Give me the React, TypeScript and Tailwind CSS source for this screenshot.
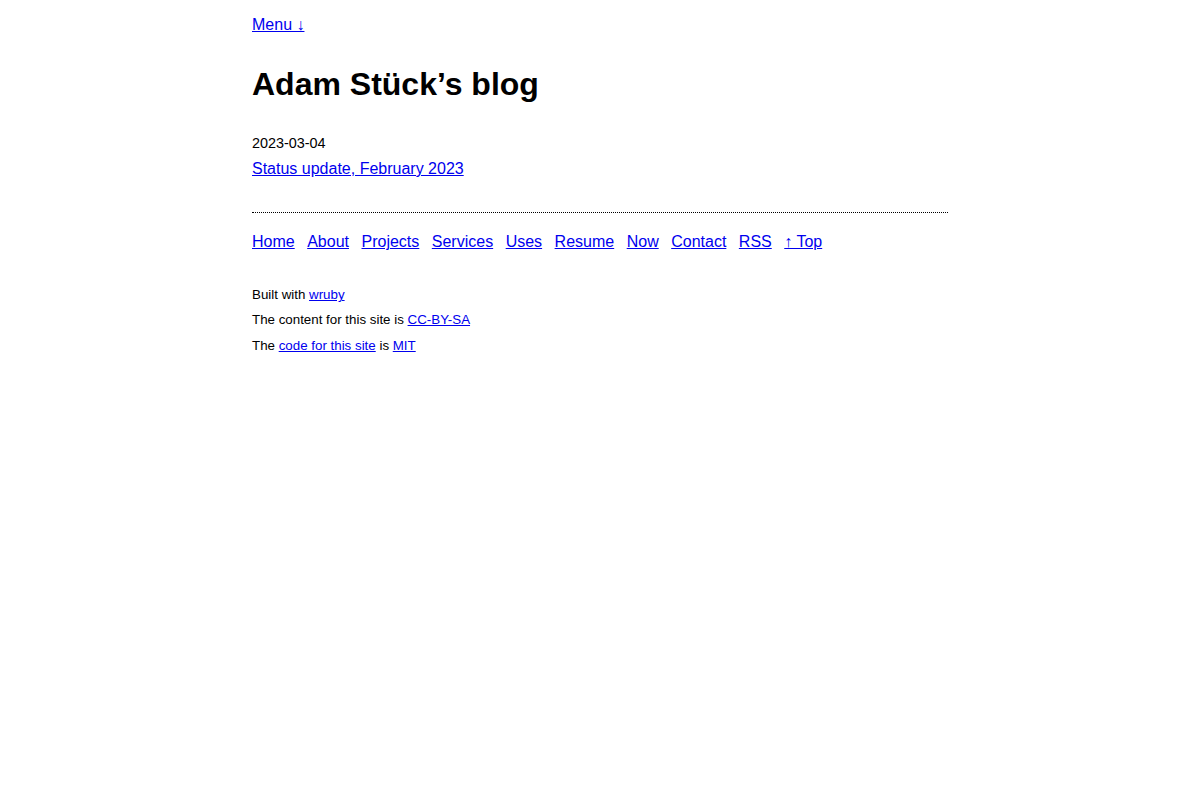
import React from 'react';

const navLinks = ['Home', 'About', 'Projects', 'Services', 'Uses', 'Resume', 'Now', 'Contact', 'RSS', '↑ Top'];

function A({ children }: { children: React.ReactNode }) {
  return (
    <a href="#" className="text-[#0000ee] underline">
      {children}
    </a>
  );
}

export default function App() {
  return (
    <div className="min-h-[800px] bg-white text-black font-['Liberation_Sans',Arial,sans-serif]">
      <div className="mx-auto w-[696px] pt-[12px] text-[16px]">
        {/* Menu */}
        <div className="leading-[25px]">
          <A>Menu ↓</A>
        </div>

        <h1 className="mt-[29px] text-[32px] font-bold leading-[37px]">Adam Stück’s blog</h1>

        {/* Post list */}
        <div className="mt-[28px] leading-[25px]">
          <div className="text-[14.4px]">2023-03-04</div>
          <div>
            <A>Status update, February 2023</A>
          </div>
        </div>

        <hr className="mt-[31px] border-0 border-t border-dotted border-black" />

        {/* Nav */}
        <nav className="mt-[16px] flex gap-[12.5px] leading-[25px]">
          {navLinks.map((l) => (
            <A key={l}>{l}</A>
          ))}
        </nav>

        {/* Footer */}
        <footer className="mt-[28px] text-[13.333px]">
          <div className="leading-[25px]">
            Built with <A>wruby</A>
          </div>
          <div className="leading-[25px]">
            The content for this site is <A>CC-BY-SA</A>
          </div>
          <div className="leading-[27px]">
            The <A>code for this site</A> is <A>MIT</A>
          </div>
        </footer>
      </div>
    </div>
  );
}
